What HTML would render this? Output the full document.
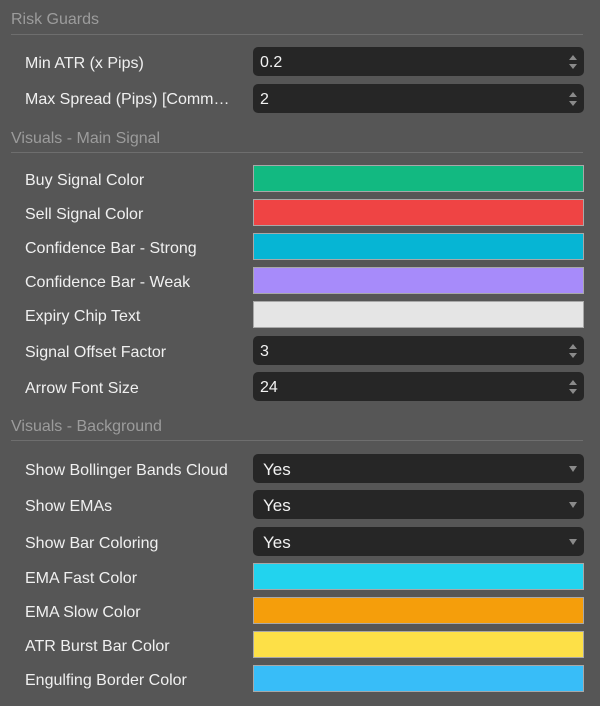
<!DOCTYPE html>
<html><head><meta charset="utf-8"><style>
html,body{margin:0;padding:0;width:600px;height:706px;background:#565656;overflow:hidden;font-family:"Liberation Sans",Arial,sans-serif;}
.h{position:absolute;left:11px;font-size:16px;color:#9c9c9c;margin-top:1px;}
.ln{position:absolute;left:11px;width:572px;height:1px;background:#6e6e6e;}
.l{position:absolute;left:25px;font-size:16px;color:#f0f0f0;white-space:nowrap;margin-top:2px;}
.i{position:absolute;left:253px;width:331px;height:29px;background:#262626;border-radius:5px;color:#f2f2f2;font-size:16px;box-sizing:border-box;padding-left:7px;padding-top:1px;line-height:29px;}
.s{padding-left:10px;font-size:17px;}
.sp:after{content:"";position:absolute;right:7px;top:8px;border-left:4px solid transparent;border-right:4px solid transparent;border-bottom:5px solid #8a8a8a;}
.sp:before{content:"";position:absolute;right:7px;top:17px;border-left:4px solid transparent;border-right:4px solid transparent;border-top:5px solid #8a8a8a;}
.dd:after{content:"";position:absolute;right:7px;top:12px;border-left:4px solid transparent;border-right:4px solid transparent;border-top:6px solid #8a8a8a;}
.c{position:absolute;left:253px;width:331px;height:27px;box-sizing:border-box;border:1px solid #a8a8a8;}
</style></head><body>
<div class="h" style="top:10px">Risk Guards</div>
<div class="ln" style="top:34px"></div>
<div class="l" style="top:53px">Min ATR (x Pips)</div>
<div class="i sp" style="top:47px">0.2</div>
<div class="l" style="top:89px">Max Spread (Pips) [Comm…</div>
<div class="i sp" style="top:84px">2</div>
<div class="h" style="top:129px">Visuals - Main Signal</div>
<div class="ln" style="top:152px"></div>
<div class="l" style="top:170px">Buy Signal Color</div>
<div class="c" style="top:165px;background:#12b981"></div>
<div class="l" style="top:204px">Sell Signal Color</div>
<div class="c" style="top:199px;background:#ef4444"></div>
<div class="l" style="top:238px">Confidence Bar - Strong</div>
<div class="c" style="top:233px;background:#06b5d4"></div>
<div class="l" style="top:272px">Confidence Bar - Weak</div>
<div class="c" style="top:267px;background:#a78bfa"></div>
<div class="l" style="top:306px">Expiry Chip Text</div>
<div class="c" style="top:301px;background:#e5e5e5"></div>
<div class="l" style="top:342px">Signal Offset Factor</div>
<div class="i sp" style="top:336px">3</div>
<div class="l" style="top:378px">Arrow Font Size</div>
<div class="i sp" style="top:372px">24</div>
<div class="h" style="top:417px">Visuals - Background</div>
<div class="ln" style="top:440px"></div>
<div class="l" style="top:460px">Show Bollinger Bands Cloud</div>
<div class="i s dd" style="top:454px">Yes</div>
<div class="l" style="top:496px">Show EMAs</div>
<div class="i s dd" style="top:490px">Yes</div>
<div class="l" style="top:533px">Show Bar Coloring</div>
<div class="i s dd" style="top:527px">Yes</div>
<div class="l" style="top:568px">EMA Fast Color</div>
<div class="c" style="top:563px;background:#22d3ee"></div>
<div class="l" style="top:602px">EMA Slow Color</div>
<div class="c" style="top:597px;background:#f59e0b"></div>
<div class="l" style="top:636px">ATR Burst Bar Color</div>
<div class="c" style="top:631px;background:#fde047"></div>
<div class="l" style="top:670px">Engulfing Border Color</div>
<div class="c" style="top:665px;background:#38bdf8"></div>
</body></html>
